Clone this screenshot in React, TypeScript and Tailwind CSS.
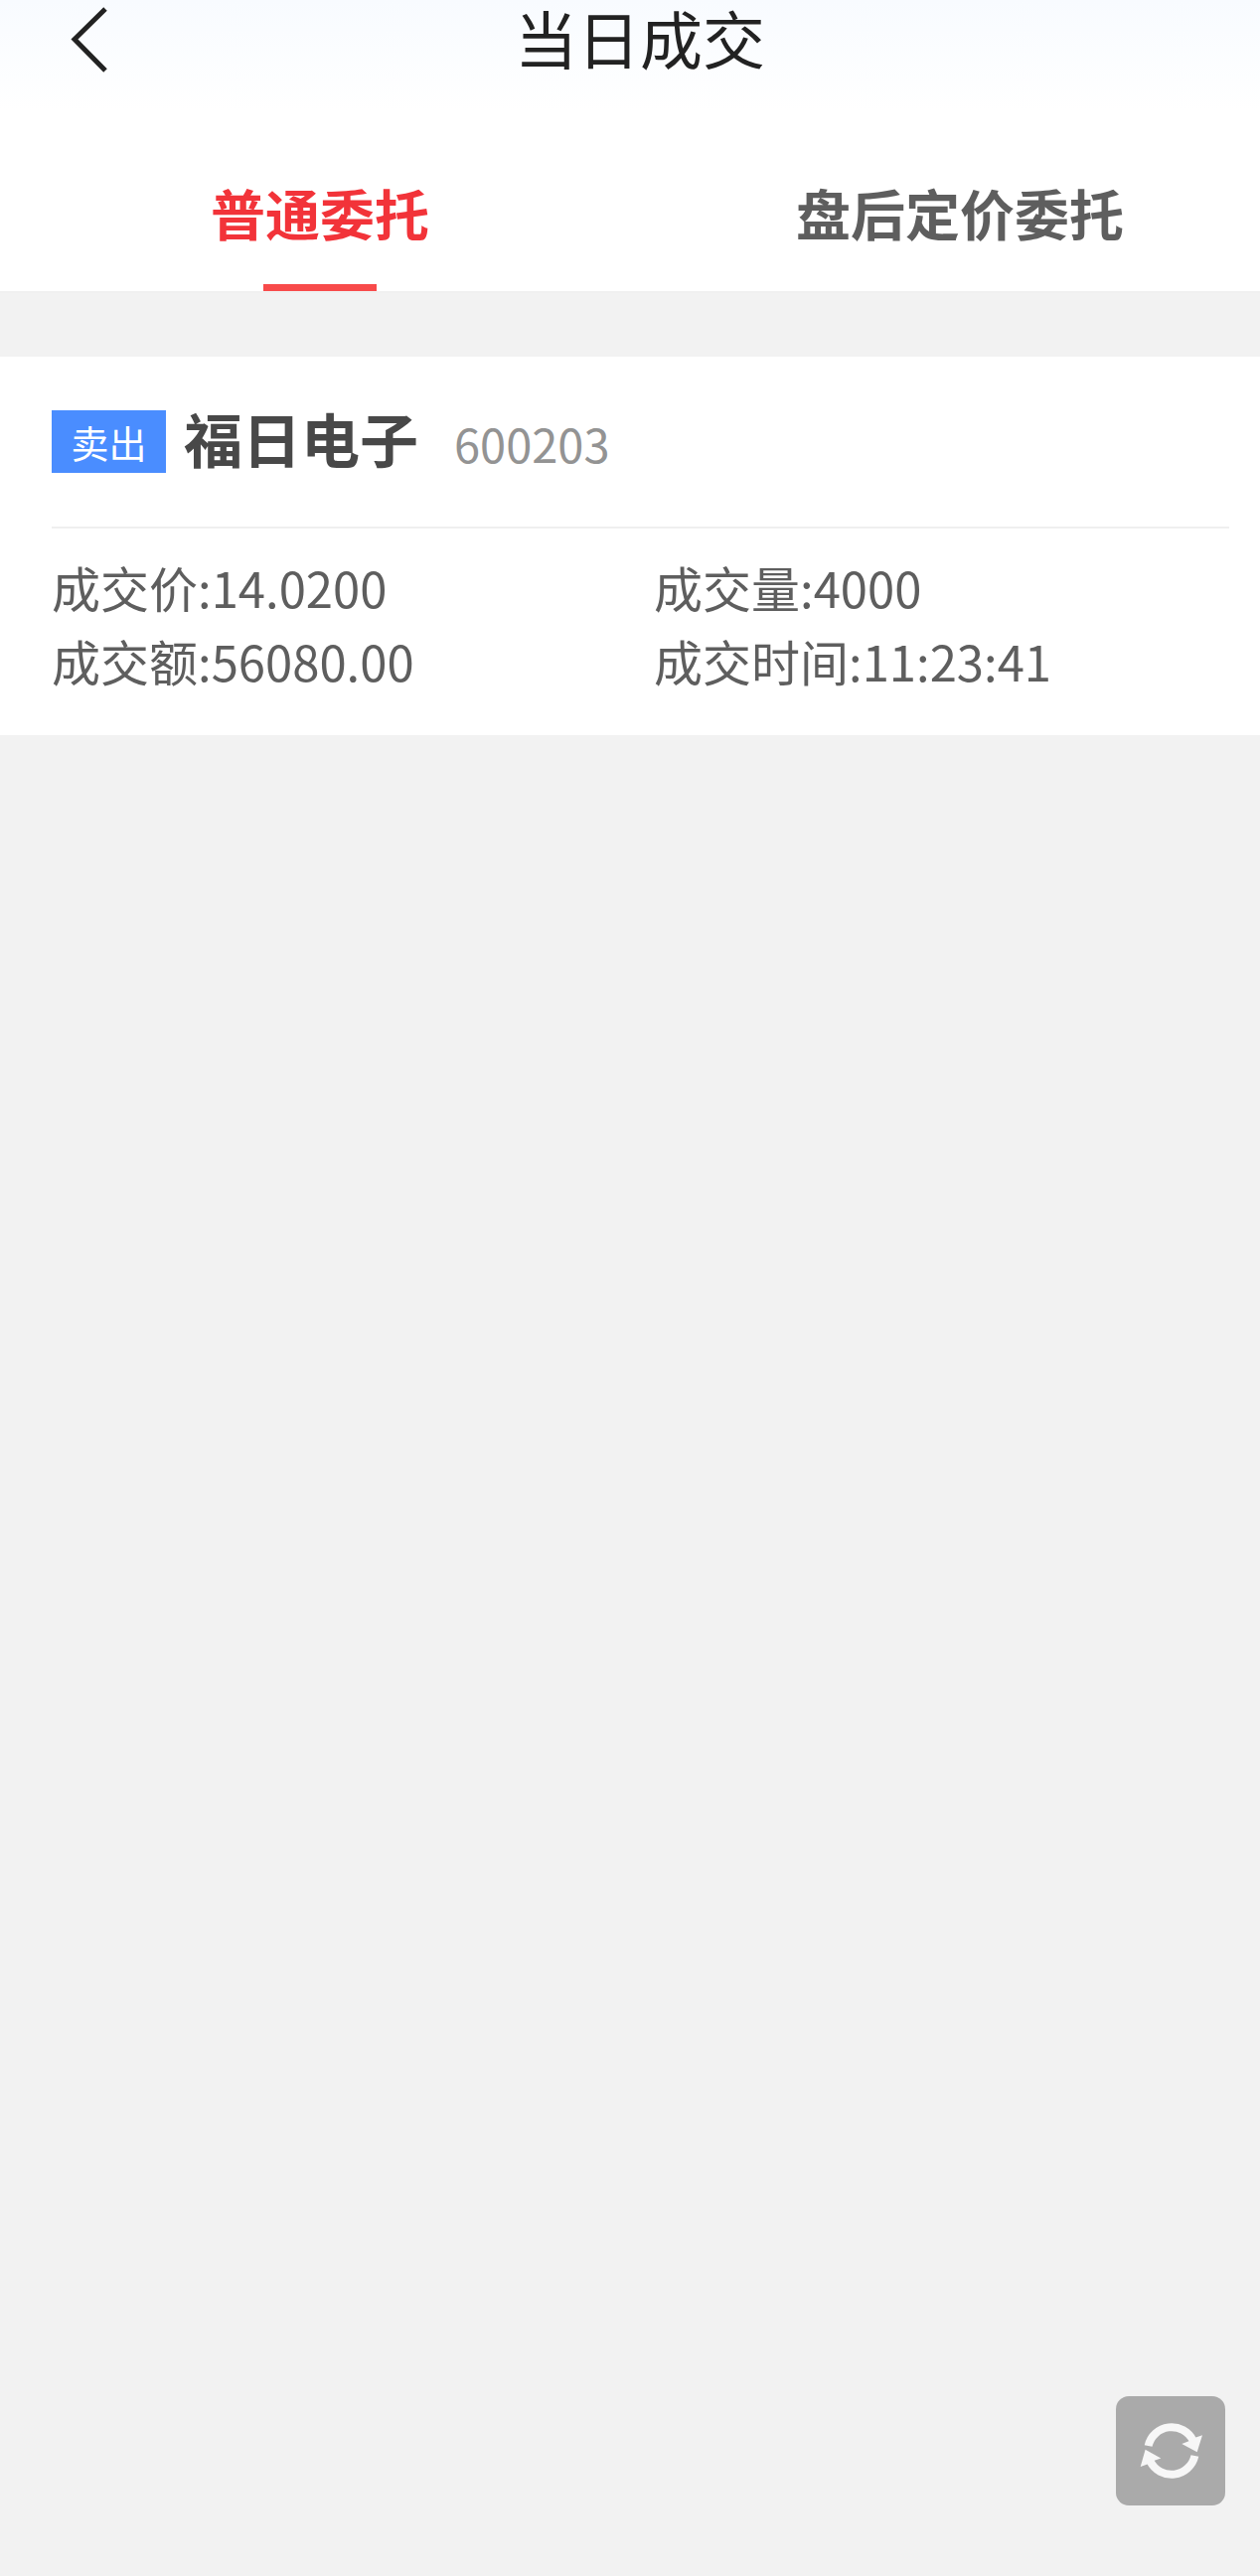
const TABS = [
  { label: "普通委托", active: true },
  { label: "盘后定价委托", active: false },
];

const DETAILS = [
  { label: "成交价", value: "14.0200" },
  { label: "成交量", value: "4000" },
  { label: "成交额", value: "56080.00" },
  { label: "成交时间", value: "11:23:41" },
];

function BackIcon() {
  return (
    <svg width="44" height="72" viewBox="0 0 44 72" fill="none" aria-hidden="true">
      <path d="M38 5 L7 35.5 L38 67" stroke="#222222" strokeWidth="5" />
    </svg>
  );
}

function RefreshIcon() {
  return (
    <svg width="110" height="110" viewBox="0 0 110 110" fill="none" aria-hidden="true">
      <path d="M32.6 50 A24 24 0 0 1 77.5 44.5" stroke="#f7f7f7" strokeWidth="8" />
      <path d="M87 39.3 L81.7 56.3 L66.3 48 L74 45 L79 42 Z" fill="#f7f7f7" />
      <path d="M79.4 60 A24 24 0 0 1 34.5 65.5" stroke="#f7f7f7" strokeWidth="8" />
      <path d="M24.7 71 L29.6 53.7 L45.3 62.5 L38 65 L33 68 Z" fill="#f7f7f7" />
    </svg>
  );
}

function Header() {
  return (
    <header className="grid h-28 grid-cols-[1fr_auto_1fr] items-start bg-linear-to-b from-[#f8fbff] to-white pl-5">
      <button type="button" aria-label="返回" className="ml-12 mt-1 justify-self-start">
        <BackIcon />
      </button>
      <h1 className="text-[63px] leading-[74px] text-[#222222]">当日成交</h1>
    </header>
  );
}

function Tabs() {
  return (
    <div className="overflow-hidden border-b-2 border-[#f0f0f0]">
      <div role="tablist" className="-mr-5 grid grid-cols-2">
        {TABS.map((tab) => (
          <button
            key={tab.label}
            type="button"
            role="tab"
            aria-selected={tab.active}
            className={
              tab.active
                ? "flex h-[181px] flex-col items-center justify-between pt-16 text-[55px] leading-[74px] font-bold text-[#f23339]"
                : "flex h-[181px] flex-col items-center justify-between pt-16 text-[55px] leading-[74px] font-bold text-[#5e5e5e]"
            }
          >
            {tab.label}
            {tab.active && <span className="h-[7px] w-[114px] bg-[#f84a4a]" />}
          </button>
        ))}
      </div>
    </div>
  );
}

function DealCard() {
  return (
    <article className="mt-16 bg-white pb-[38px] pl-[52px]">
      <div className="mr-[31px] flex h-[173px] items-center border-b-2 border-[#efefef]">
        <span className="flex h-[63px] w-[115px] items-center justify-center bg-[#4a8dff] text-[38px] leading-none text-white">
          卖出
        </span>
        <h2 className="ml-[18px] pb-2 text-[59px] leading-20 font-bold text-[#484848]">福日电子</h2>
        <span className="ml-9 pt-0.5 text-[47px] leading-16 text-[#939393]">600203</span>
      </div>
      <dl className="mr-1 grid grid-cols-2 pt-[22px] text-[49px] leading-[74px] text-[#5e5e5e]">
        {DETAILS.map((item) => (
          <div key={item.label} className="flex">
            <dt>{item.label}:</dt>
            <dd>{item.value}</dd>
          </div>
        ))}
      </dl>
    </article>
  );
}

export default function App() {
  return (
    <div
      lang="zh-CN"
      className="min-h-screen bg-[#f2f2f2] font-['Noto_Sans_CJK_SC',sans-serif]"
    >
      <div className="bg-white">
        <Header />
        <Tabs />
      </div>
      <main>
        <DealCard />
      </main>
      <button
        type="button"
        aria-label="刷新"
        className="fixed right-[35px] bottom-[71px] rounded-[13px] bg-[#aaaaaa]"
      >
        <RefreshIcon />
      </button>
    </div>
  );
}
